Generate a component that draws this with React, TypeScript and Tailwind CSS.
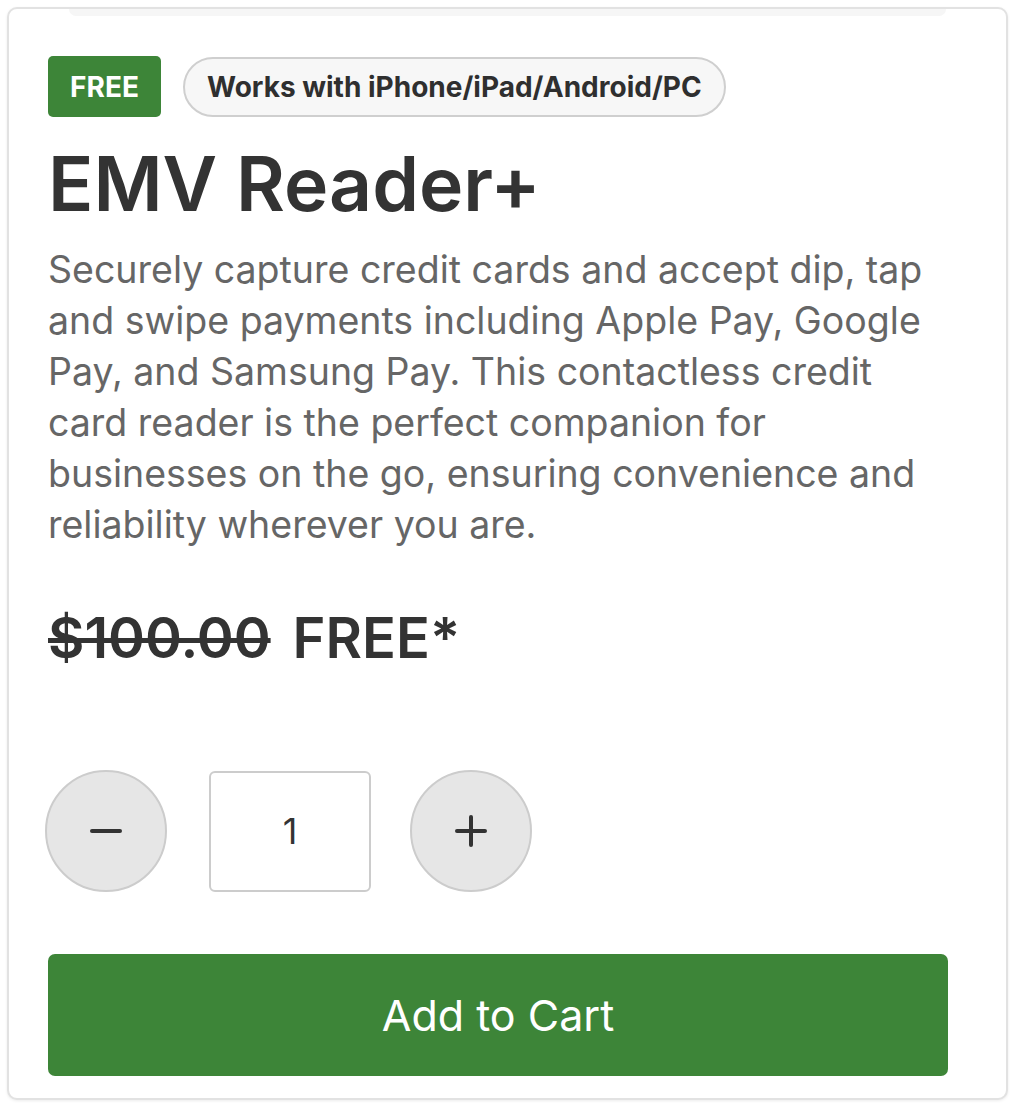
import { useState } from "react";

// Product card for the EMV Reader+ — badges, description, price and a
// quantity stepper above the add-to-cart action.

export default function App() {
  const [qty, setQty] = useState(1);

  return (
    <div className="min-h-[1107px] bg-white p-[7px] font-['Inter',sans-serif]">
      <div className="relative rounded-[10px] border-2 border-[#e2e2e2] bg-white pl-[39px] pr-[58px] pt-[47px] pb-[22px] shadow-[0_1px_3px_rgba(0,0,0,0.08)]">
        {/* faint edge of the card stacked above */}
        <div className="absolute left-[60px] right-[60px] top-0 h-[7px] rounded-b-[10px] bg-[#f6f6f6]" />

        <div className="flex items-center gap-[22px]">
          <span className="flex h-[61px] w-[113px] items-center justify-center rounded-[5px] bg-[#3d8538] text-[28px] font-bold text-white">
            FREE
          </span>
          <span className="flex h-[60px] items-center rounded-full border-2 border-[#cfcfcf] bg-[#f7f7f7] px-[22px] text-[28px] font-bold text-[#2f2f2f]">
            Works with iPhone/iPad/Android/PC
          </span>
        </div>

        <h1 className="mt-[22px] text-[75px] font-semibold leading-[90px] text-[#333333]">
          EMV Reader+
        </h1>

        <p className="mt-[15px] text-[37.5px] leading-[51px] text-[#666666]">
          Securely capture credit cards and accept dip, tap
          <br />
          and swipe payments including Apple Pay, Google
          <br />
          Pay, and Samsung Pay. This contactless credit
          <br />
          card reader is the perfect companion for
          <br />
          businesses on the go, ensuring convenience and
          <br />
          reliability wherever you are.
        </p>

        <div className="mt-[53px] flex items-baseline gap-[22px] text-[56px] font-semibold leading-[70px] text-[#333333]">
          <span className="line-through decoration-[5px]">$100.00</span>
          <span>FREE*</span>
        </div>

        <div className="mt-[97px] flex items-center">
          <button
            type="button"
            onClick={() => setQty((q) => Math.max(1, q - 1))}
            className="ml-[-3px] flex h-[122px] w-[122px] items-center justify-center rounded-full border-2 border-[#cccccc] bg-[#e6e6e6]"
          >
            <span className="block h-[4px] w-[32px] rounded-full bg-[#333333]" />
          </button>
          <div className="ml-[42px] flex h-[121px] w-[162px] items-center justify-center rounded-[6px] border-2 border-[#cccccc] bg-white text-[36px] text-[#333333]">
            {qty}
          </div>
          <button
            type="button"
            onClick={() => setQty((q) => q + 1)}
            className="ml-[39px] relative flex h-[122px] w-[122px] items-center justify-center rounded-full border-2 border-[#cccccc] bg-[#e6e6e6]"
          >
            <span className="absolute h-[4px] w-[32px] rounded-full bg-[#333333]" />
            <span className="absolute h-[32px] w-[4px] rounded-full bg-[#333333]" />
          </button>
        </div>

        <button
          type="button"
          className="mt-[62px] flex h-[122px] w-full items-center justify-center rounded-[7px] bg-[#3d8538] text-[43px] text-white"
        >
          Add to Cart
        </button>
      </div>
    </div>
  );
}
